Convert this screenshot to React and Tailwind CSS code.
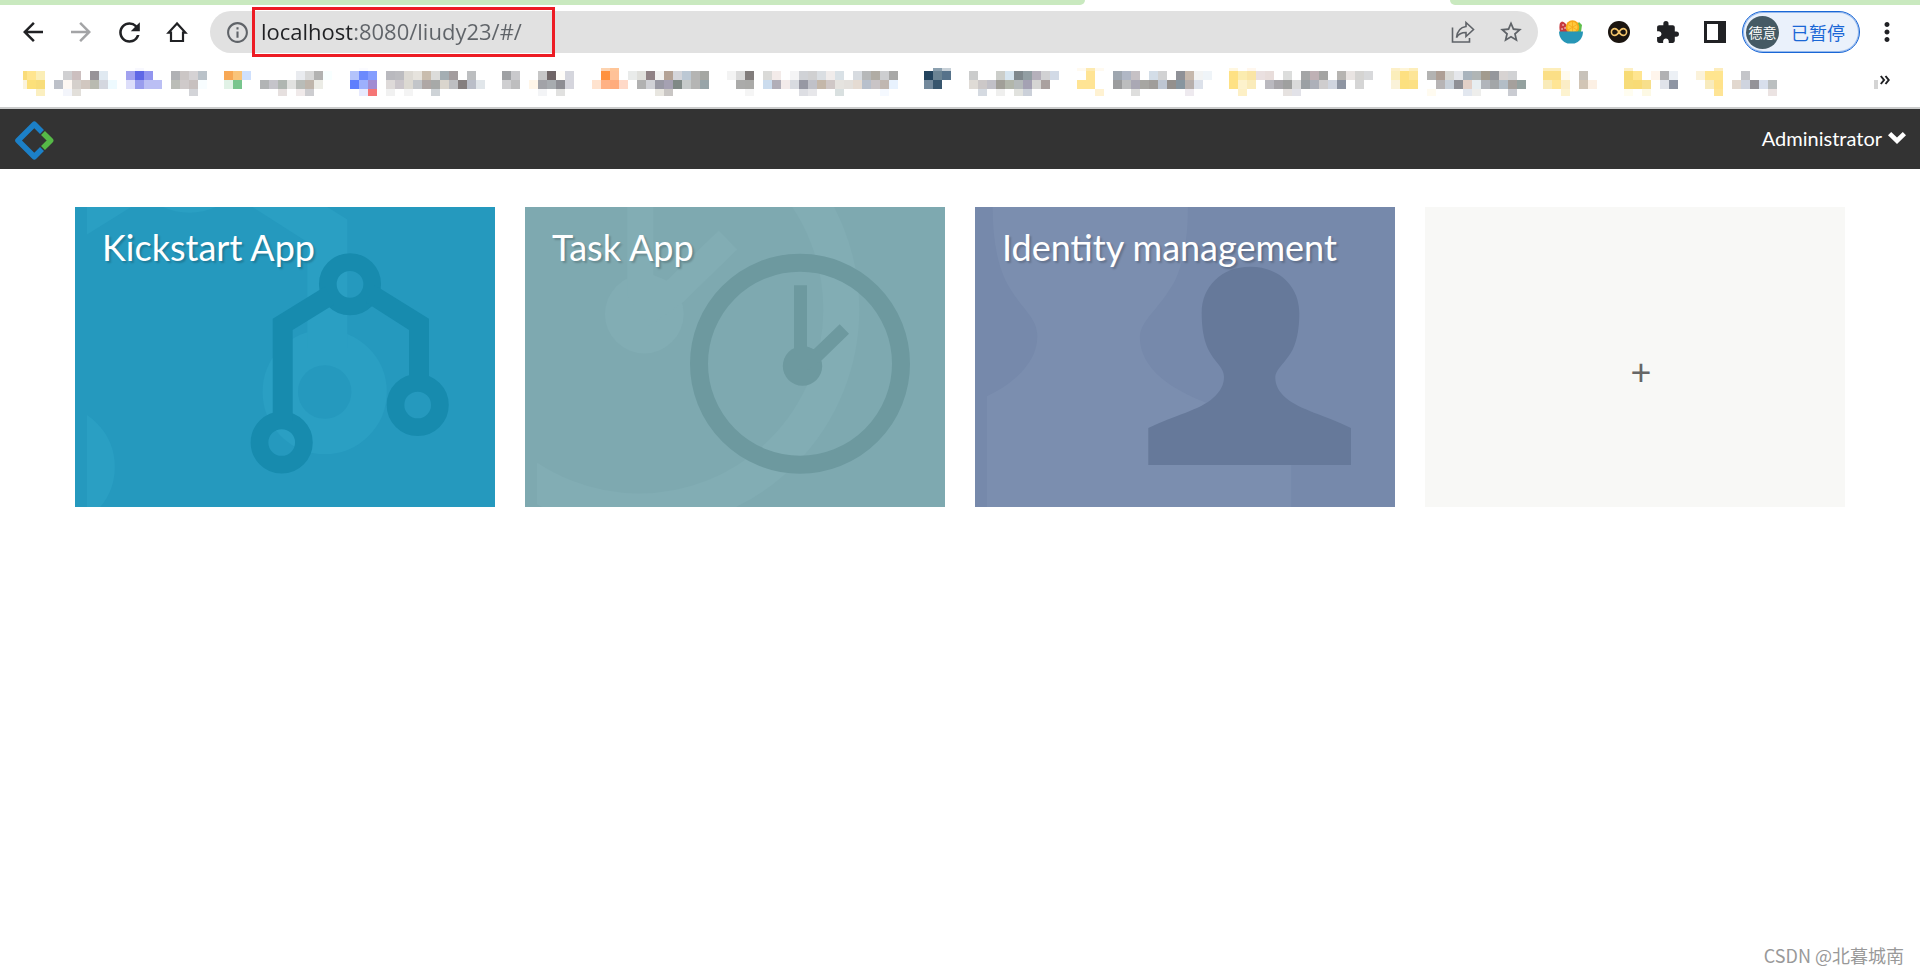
import React from 'react';
import { MdArrowBack, MdArrowForward, MdRefresh, MdOutlineInfo, MdStarBorder, MdExtension, MdMoreVert } from 'react-icons/md';

const ROW_Y = [0, 3, 12, 21];
const ROW_H = [3, 9, 9, 7];

// Pixelated bookmarks: rows of 9px cells, "." is an empty cell
const BOOKMARKS = [
  {
    width: 103, trim: 5,
    rows: [
      '',
      'f9dc7a ffe58f fbeeb6 . . d0d0d2 ccbfbf . 979398 e0e9f1',
      'fbf3dc fce07a f8dd7a . bdc1c9 fdf7f2 d5d0cc d1c7c0 b9bab1 d4d7df eefaff',
      '. . fbefc0 . . f3f5fb e2dfda',
    ],
  },
  {
    width: 98,
    rows: [
      '. f8f8fe',
      'a2a2ef 5f67e6 9295ef . . b0b1b4 cbc6c5 d5d2d4 bac2c9',
      'dddefa 999dee bbbff4 bbbff4 . bbbdb7 cfcaca c7c0bf f8fdff',
      '. . . . . . . d3d4d8',
    ],
  },
  {
    width: 126,
    rows: [
      '',
      'f7a855 f9c47a cfe0fd . . . . . e9ebef d8d8d8 b2b2b1 f8ffff',
      'e1f2e6 78c58d . . b2b4b5 c5c4ca b0b6b1 e2e2e0 b9bcb8 bfb5ab ecece6',
      '. . . . . . e6e0df . f0eaea cdcdd0',
    ],
  },
  {
    width: 152,
    rows: [
      '. fbfbff',
      'b3c3fb 6c8afd 849dfe . b9b9be bcbcc0 dddad4 e6e3dd c9bdae dcdcda a4aeb3 a39d9e . bcbec0',
      '5f7ffd 9db0fd a18cd2 . dedad9 cbc6cb dcd9d2 c2c5c9 afa7a5 a7a9a8 dad5cd bebfc2 857f7f babec8 e1e6ea',
      '. e7eafe f57676 . f1f1f1 . f4f4f4 . . ced3d7',
    ],
  },
  {
    width: 90,
    rows: [
      '',
      '9fa1a4 c9c9cc . . c6c6c6 6f6565 fffdf8 d5d6dd',
      'cfcfd1 bebebf . fff6e9 a2a3a8 a8acb0 8e8e94 d5d5dd',
      '. . . . f3f4f6 . e1e1e0',
    ],
  },
  {
    width: 135,
    rows: [
      '. fdd3b0 ffc598',
      '. ff923e ffc298 . e9ebea e0e0dc 8f8184 f2f2f1 b4a295 d4d5da bcc8d4 b4b4b3 a5a7a3',
      'ffe3cf ffb184 ffac7d ffd9c8 . b1b1b1 d0d1d6 9999a4 a5a1b2 7f8986 c6caca b5b5b4 98a4a8',
      '. . . . . . . e8e6e0 c9c6c4',
    ],
  },
  {
    width: 197,
    rows: [
      '',
      'f3f3f3 dadada 827d7c . dadad8 f3ebe9 . f4f4f5 d0d2d6 d0d0d1 dadee2 f0eceb d9e1e6 . d7dbe0 b6b8b9 b0aca4 cdced0 a8a8a7',
      '. ababaa aaaaa8 . cbdcee b1aeb8 f3ebea d8dbe0 9798a3 c0c1c8 c4b7a9 cfc7c6 e5e3df e3e0dc e5dbd2 b8c0cc c9c4c6 c0b7b1 e8f2fe',
      '. . f5f5f5 . . . . . dddee3 e7e7ea . . d9e0e0 . . . . f5f9ff',
    ],
  },
  {
    width: 153,
    rows: [
      '. 8ba0af c8d1d8',
      '23445e 6a8393 56728a . . cbcccc . . ccceca d6e5f0 7f888d 929ea3 b5b0bb d1d1d3 d2dae6',
      '73899c 38566e . . . dfdbd6 ccc8c8 c1c0c7 a19f98 b2b6ab b4b9ba a4a1b3 d5d5d3 aaa19f',
      '. . . . . . d5dae1 . efefee . e1e2de cbd0d9',
    ],
  },
  {
    width: 152,
    rows: [
      'fffaf0 fdeab0 fffaf0',
      '. ffe494 . . 9ea6af b0b7c5 c6c1c5 . d3dde7 d1d2d3 . 8f9197 c6b8ac f2f3f3 eff4f8',
      'ffe494 ffe494 . . 9b9c9d bcbdbe aaa8b4 a7a6a2 a09d9a bec6d2 94908d 87959f b7afac dce1ea',
      '. . fff2d2 . . . dededd . . . . . eeeaef',
    ],
  },
  {
    width: 162,
    rows: [
      'fff7e0 . fff7ee',
      'fee184 fbecb0 fae5a5 eae0e0 e8dddb . dcdddc . a4a5a6 bfb1b5 a4a4a3 . b6b4b1 e9e4e2 d5d4d2 d8d9db',
      'fee184 fdf2cc faebba . bab9bf a8a6aa 9fa09f dadada 9ba0a4 adb0b9 cfcdce d0d5df 8e95a2 . d5d5d5',
      '. fdf0c6 . . . . e6e2e0 e2e2e8',
    ],
  },
  {
    width: 152,
    rows: [
      'fdf0c8 fef5d8 fdeebb',
      'fbeebb fde081 fde597 . b3b3b2 ae9f95 d8d8d4 e5e7eb a9b4bd b0b5b5 a29b8e 95979c d7d3d2 d1d2d4',
      'faf2d9 fce07f fce084 . . b7b4b5 c8d0d9 8f9096 e3d0c7 e7eef1 b1b5bb a3a6a8 b3bdc6 a5a09c 94a19f',
      '. . . . fffbf0 . . . e2e7ef eeeeec . . . caccd2',
    ],
  },
  {
    width: 81,
    rows: [
      'fdeebb fdeebb',
      'fbdf86 fbdf86 fffbee . c8c2ba',
      'f9ebb9 ffe595 fbedc6 . d2c5b5 fcf0e4',
      '. . fdf3d0',
    ],
  },
  {
    width: 72,
    rows: [
      'fdf0c4',
      'f7db75 ffe590 . fff5ec b1b1b3 ecf0f5',
      'f7dc79 f8db76 f7df8b . e0e3ea 8e95a3',
      'fffdf0 . fdf9e4',
    ],
  },
  {
    width: 90,
    rows: [
      '. . fdedbd',
      'fbf2da ffe58f ffe58f . . c4c5c9',
      '. f8ebbd ffe28a . e2d8cf cfd4df 949398 d8dfec bbbfc0',
      '. . fee495 . . . . . ebe3e2',
    ],
  },
];

const APPS = [
  {
    title: 'Kickstart App', bg: 'bg-[#2599be]', light: 'text-[#2a9fc3]', dark: 'text-[#178bae]',
    shape: (
      <>
        <g fill="none" stroke="currentColor" strokeWidth="17.7">
          <circle cx="275" cy="77.3" r="22.2" />
          <circle cx="206.7" cy="235.5" r="22.2" />
          <circle cx="342.7" cy="198" r="22.2" />
        </g>
        <path fill="currentColor" d="M197.7 214V111.7L250 79.5 259 97.4 217.7 123V214Z" />
        <path fill="currentColor" d="M354 176V111.7L300 78.3 291 95.6 334 123V176Z" />
      </>
    ),
  },
  {
    title: 'Task App', bg: 'bg-[#7ea9b0]', light: 'text-[#82adb4]', dark: 'text-[#6d999f]',
    shape: (
      <>
        <circle cx="275" cy="156.7" r="101" fill="none" stroke="currentColor" strokeWidth="18" />
        <circle cx="277.5" cy="159" r="19.7" fill="currentColor" />
        <path fill="currentColor" d="M269 78.3H282V139.5L288.7 142.3 314.7 117.3 324 126.7 297 153 280 165 269 150Z" />
      </>
    ),
  },
  {
    title: 'Identity management', bg: 'bg-[#7689ab]', light: 'text-[#7b8eaf]', dark: 'text-[#66799a]',
    shape: (
      <path
        fill="currentColor"
        d="M173.3 221C200 208 225 203 238 191C246 184 249 177 249 170C249 160 240 156 233 142C228 131 226.7 118 226.7 106C226.7 80 246 59.7 275 59.7C305 59.7 324.3 80 324.3 106C324.3 118 323 131 318 142C310 157 300.3 162 300.3 171C300.3 178 304 185 311 191C325 203 350 208 376 221V258H173.3Z"
      />
    ),
  },
];

function Bookmark({ width, trim = 0, rows }) {
  return (
    <a href="#" aria-label="Bookmark" className="shrink-0">
      <svg width={width} height="28" viewBox={`${trim} 0 ${width} 28`} shapeRendering="crispEdges">
        {rows.map((row, r) =>
          row.split(' ').map((c, i) =>
            c && c !== '.' ? (
              <rect key={`${r}-${i}`} x={i * 9} y={ROW_Y[r]} width="9" height={ROW_H[r]} fill={`#${c}`} />
            ) : null
          )
        )}
      </svg>
    </a>
  );
}

function IconButton({ label, className = 'text-[#202124]', children }) {
  return (
    <button type="button" aria-label={label} className={`w-12 h-10 shrink-0 flex items-center justify-center ${className}`}>
      {children}
    </button>
  );
}

function BrowserBar() {
  return (
    <div className="bg-white">
      {/* Tab strip */}
      <div className="flex h-[5px]">
        <div className="flex-1 bg-[#c9e9bf] rounded-br-lg" />
        <div className="w-[365px]" />
        <div className="w-[470px] bg-[#c9e9bf] rounded-bl-lg" />
      </div>

      {/* Toolbar */}
      <div className="flex items-center h-[54px] px-[9px]">
        <IconButton label="Back"><MdArrowBack size={30} /></IconButton>
        <IconButton label="Forward" className="text-[#a3a4a6]"><MdArrowForward size={30} /></IconButton>
        <IconButton label="Reload"><MdRefresh size={31} /></IconButton>
        <IconButton label="Home">
          <svg width="24" height="24" viewBox="0 0 24 24" fill="none" stroke="currentColor" strokeWidth="2.2">
            <path d="M12 3.4 3.6 12.6H6V21H18V12.6H20.4Z" />
          </svg>
        </IconButton>

        <div className="flex-1 flex items-center h-[42px] ml-[9px] pl-[15px] pr-[3px] rounded-full bg-[#e1e1e1]">
          <MdOutlineInfo size={25} className="shrink-0 text-[#5f6368]" />
          <div className="shrink-0 w-[303px] h-[50px] ml-[2px] border-[3px] border-[#ed1c24]">
            <input
              type="text"
              aria-label="Address"
              defaultValue="localhost:8080/liudy23/#/"
              className="w-full h-full px-[6px] pb-[2px] outline-none font-['Open_Sans',sans-serif] text-[22px] text-transparent bg-clip-text bg-[linear-gradient(90deg,#202124_97px,#5f6368_97px)]"
            />
          </div>
          <div className="flex-1" />
          <IconButton label="Share" className="text-[#5f6368]">
            <svg width="24" height="24" viewBox="0 0 24 24" fill="none" stroke="currentColor" strokeWidth="1.6">
              <path d="M1.5 7.5V22H18.5V18" />
              <path d="M15 2.5 22.5 9.5 15 16.5V12.5C10.5 12.5 7.5 14 5.5 17.5C6.2 11 9.5 7.3 15 6.5Z" />
            </svg>
          </IconButton>
          <IconButton label="Bookmark this tab" className="text-[#5f6368]"><MdStarBorder size={26} /></IconButton>
        </div>

        <div className="flex items-center ml-[9px]">
          <IconButton label="Salad extension">
            <svg width="24" height="24" viewBox="0 0 24 24">
              <path d="M1 3 3 1.5C7 2.5 9 6 9 12H1C.2 9 .2 5 1 3Z" fill="#c73a3f" />
              <path d="M23 5 20 2C18 4 16 8 16 12H22Z" fill="#5fbf4c" />
              <circle cx="13.500" cy="7" r="6.8" fill="#f7a81b" />
              <circle cx="13.500" cy="7" r="5" fill="#ffc93c" />
              <path d="M13.5 2V12M9 4.5 18 10M18 4.5 9 10" stroke="#f7a81b" strokeWidth=".8" />
              <path d="M4 5h.1M6 8h.1M3 9h.1" stroke="#fff" strokeWidth="1.4" strokeLinecap="round" />
              <path d="M0 11.5H24C24 18 20 22 15.5 23.5H8.5C4 22 0 18 0 11.5Z" fill="#2796b6" />
            </svg>
          </IconButton>
          <IconButton label="Infinity extension">
            <svg width="22" height="22" viewBox="0 0 22 22">
              <circle cx="11" cy="11" r="11" fill="#1b1510" />
              <path d="M11 11C9.5 8.5 8.3 7.6 6.8 7.6A3.4 3.4 0 0 0 6.8 14.4C8.3 14.4 9.5 13.5 11 11C12.5 8.5 13.7 7.6 15.2 7.6A3.4 3.4 0 0 1 15.2 14.4C13.7 14.4 12.5 13.5 11 11Z" fill="none" stroke="#f3c46a" strokeWidth="1.6" />
            </svg>
          </IconButton>
          <IconButton label="Extensions"><MdExtension size={25} /></IconButton>
          <IconButton label="Side panel">
            <svg width="22" height="22" viewBox="0 0 22 22">
              <path fill="currentColor" fillRule="evenodd" d="M0 0H22V22H0ZM3 3V19H14V3Z" />
            </svg>
          </IconButton>
          <button type="button" className="flex items-center h-[42px] w-[118px] mx-[3px] pl-[3px] rounded-full border border-[#1a67d6] ring-1 ring-inset ring-[#1a67d6]/40 bg-[#eaf1fb] font-['Noto_Sans_CJK_SC',sans-serif]">
            <span className="w-[33px] h-[33px] shrink-0 rounded-full bg-[#455a64] text-white text-sm flex items-center justify-center">德意</span>
            <span className="ml-[12px] text-lg leading-none text-[#1a67d6]">已暂停</span>
          </button>
          <IconButton label="Menu"><MdMoreVert size={30} /></IconButton>
        </div>
      </div>

      {/* Bookmarks */}
      <div className="flex items-center h-[50px] pl-[23px] pr-[30px] pb-[2px] border-b-2 border-[#cbcccc]">
        {BOOKMARKS.map((b, i) => <Bookmark key={i} {...b} />)}
        <div className="flex-1" />
        <div className="w-1 h-[9px] mr-[2px] mt-1 bg-[#d4d4d4]" />
        <button type="button" aria-label="More bookmarks" className="mb-1 text-[#202124]">
          <svg width="10" height="10" viewBox="0 0 10 10" fill="none" stroke="currentColor" strokeWidth="2">
            <path d="M.8 1 4 5 .8 9M5.5 1 8.7 5 5.5 9" />
          </svg>
        </button>
      </div>
    </div>
  );
}

function AppCard({ app }) {
  return (
    <a href="#" className={`relative block h-[300px] overflow-hidden ${app.bg}`}>
      <svg className="absolute inset-0 w-full h-full" viewBox="0 0 420 300" preserveAspectRatio="xMinYMin meet">
        <svg x="12" y="0" width="408" height="300" viewBox="12 0 408 300" className={app.light}>
          <g transform="translate(-435.7 -211) scale(2)">{app.shape}</g>
        </svg>
        <g className={app.dark}>{app.shape}</g>
      </svg>
      <h2 className="relative px-[27px] pt-[17px] text-[36px] leading-[46px] text-white [text-shadow:2px_2px_2px_rgba(0,0,0,0.2)]">
        {app.title}
      </h2>
    </a>
  );
}

export default function App() {
  return (
    <div className="relative min-h-screen bg-white font-['Lato',sans-serif]">
      <BrowserBar />

      <header className="flex items-center justify-between h-[60px] px-[14px] bg-[#333333]">
        <a href="#" aria-label="Home" className="pt-[2px]">
          <svg width="40" height="40" viewBox="0 0 40 40" fill="none" strokeWidth="5.6" strokeLinejoin="round">
            <path d="M28 12 20.300 4.300 4 20.500 20.300 36.700 28 29" stroke="#1c80c7" />
            <path d="M29 13 36.600 20.500 29 28" stroke="#56b947" />
          </svg>
        </a>
        <button type="button" className="flex items-center gap-1.5 pb-[2px] text-xl text-white">
          Administrator
          <svg width="18" height="12" viewBox="0 0 18 12" fill="currentColor">
            <path d="M3.200 0 9 5.600 14.800 0 18 3.200 9 12 0 3.200Z" />
          </svg>
        </button>
      </header>

      <main className="grid grid-cols-4 gap-[30px] px-[75px] pt-[38px]">
        {APPS.map((app) => <AppCard key={app.title} app={app} />)}
        <button type="button" className="h-[300px] pt-[28px] pl-[12px] flex items-center justify-center bg-[#f8f8f6] text-[36px] leading-none text-[#666666]">
          +
        </button>
      </main>

      <div className="absolute right-4 bottom-[7px] text-lg leading-6 text-[#999999] font-['Noto_Sans_CJK_SC',sans-serif]">
        CSDN @北暮城南
      </div>
    </div>
  );
}
